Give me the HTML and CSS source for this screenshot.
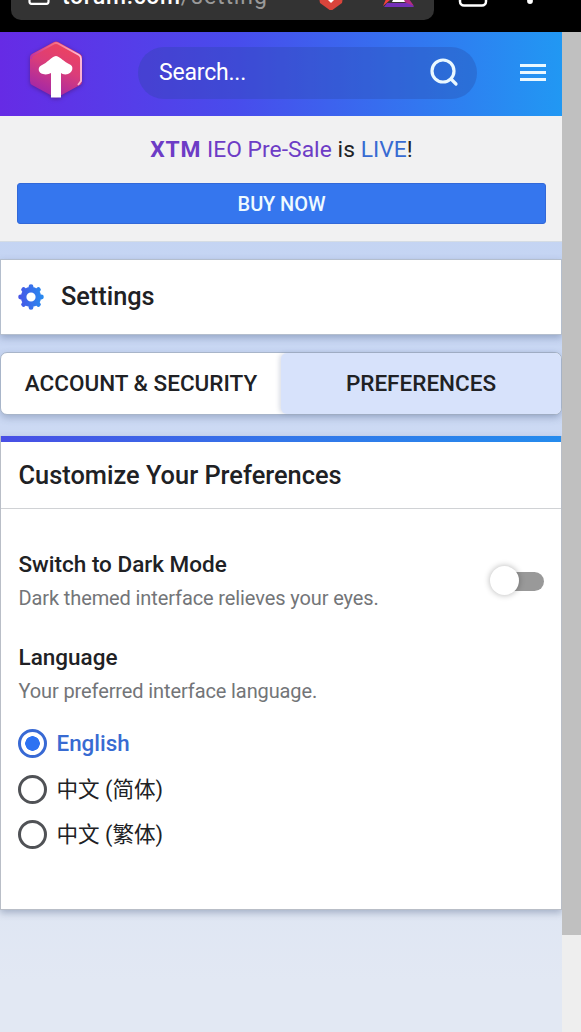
FILE: index.html
```html
<!DOCTYPE html>
<html lang="en">
<head>
<meta charset="utf-8">
<title>Settings</title>
<link rel="stylesheet" href="styles.css">
</head>
<body>
<div class="browser-bar">
  <div class="address">
    <svg class="lock" width="24" height="20" viewBox="0 0 24 20"><rect x="2.500" y="3" width="19" height="14.800" rx="2" fill="none" stroke="#fff" stroke-width="2.200"/></svg>
    <span class="url">torum.com<span class="path">/setting</span></span>
    <svg class="shield" width="28" height="24" viewBox="0 0 28 24"><path d="M0 0H28L25 17L14 25L3 17Z" fill="#d9443b"/><path d="M10 8H18L17 14L14 17L11 14Z" fill="#fff"/></svg>
    <svg class="reward" width="34" height="24" viewBox="0 0 34 24"><path d="M8 4H17V14H8L1 20Z" fill="#f5413c"/><path d="M5 17H29L32 21H2Z" fill="#7430b8"/><path d="M17 4L27 13L32 20L20 15Z" fill="#b52c83"/><path d="M12 12H21L23 16H10Z" fill="#fff"/></svg>
  </div>
  <svg class="browser-actions" width="120" height="32" viewBox="0 0 120 32"><rect x="14" y="-20" width="26" height="25.500" rx="4" fill="none" stroke="#fff" stroke-width="2.500"/><circle cx="84" cy="1" r="2.900" fill="#fff"/></svg>
</div>
<div class="viewport">
  <div class="page">
    <header class="header">
      <svg class="logo" width="66" height="68" viewBox="0 0 66 68">
        <defs>
          <linearGradient id="hex" x1="0.700" y1="0" x2="0.300" y2="1"><stop offset="0" stop-color="#f0435b"/><stop offset="0.450" stop-color="#db3d79"/><stop offset="1" stop-color="#9d25ac"/></linearGradient>
          <linearGradient id="rim" x1="0" y1="0.500" x2="1" y2="0.400"><stop offset="0" stop-color="#bd2fa8"/><stop offset="0.500" stop-color="#f36b81"/><stop offset="1" stop-color="#ffc2df"/></linearGradient>
        </defs>
        <path d="M32 5Q34 4 36 5L58 17Q60 18 60 21V44Q60 47 58 48L36 60Q34 61 32 60L10 48Q8 47 8 44V21Q8 18 10 17Z" fill="url(#hex)"/>
        <path d="M9 22Q9 19 11 18L32 6.500Q34 5.500 36 6.500L57 18Q59 19 59 22V44L56 48" fill="none" stroke="url(#rim)" stroke-width="1.800"/>
        <path d="M34 19C39 20 42 25 47 27C53 29 50 36 46 37C43 38 40 37 39 36V60.500H29V36C27 37 24 38 21 37C16 36 15 30 20 28C25 26 29 20 34 19Z" fill="#fff"/>
      </svg>
      <div class="search"><span class="search-text">Search...</span>
        <svg width="30" height="30" viewBox="0 0 30 30" fill="none" stroke="#eaf8ff" stroke-width="3.200" stroke-linecap="round"><circle cx="13" cy="13" r="11"/><path d="M21 21L26 26"/></svg>
      </div>
      <svg class="menu" width="26" height="18" viewBox="0 0 26 18" fill="#eaf8ff"><path d="M0 0H26V3H0ZM0 7H26V10H0ZM0 14H26V17H0Z"/></svg>
    </header>
    <section class="banner">
      <div class="sale"><span class="token"><b>XTM</b> IEO Pre-Sale</span> is <span class="live">LIVE</span>!</div>
      <div class="buy">BUY NOW</div>
    </section>
    <div class="card title">
      <svg class="gear" width="26" height="26" viewBox="-13 -13 26 26">
        <defs><linearGradient id="blue" gradientUnits="userSpaceOnUse" x1="-12" y1="0" x2="12" y2="0"><stop offset="0" stop-color="#4755e6"/><stop offset="1" stop-color="#298bef"/></linearGradient></defs>
        <circle r="7.400" fill="none" stroke="url(#blue)" stroke-width="5.600"/>
        <path d="M0-10V-10.400M0 10V10.400M-10 0H-10.400M10 0H10.400M-7-7L-7.400-7.400M7 7L7.400 7.400M-7 7L-7.400 7.400M7-7L7.400-7.400" fill="none" stroke="url(#blue)" stroke-width="4.800" stroke-linecap="round"/>
      </svg>
      <span class="title-text">Settings</span>
    </div>
    <nav class="tabs"><div class="tab"><span class="account">ACCOUNT &amp; SECURITY</span></div><div class="tab active"><span class="prefs">PREFERENCES</span></div></nav>
    <main class="panel">
      <h2 class="panel-title"><span>Customize Your Preferences</span></h2>
      <div class="dark-row">
        <div><h3 class="dark-title">Switch to Dark Mode</h3><p class="dark-note">Dark themed interface relieves your eyes.</p></div>
        <div class="switch"><div class="knob"></div></div>
      </div>
      <h3 class="lang-title">Language</h3>
      <p class="lang-note">Your preferred interface language.</p>
      <div class="options">
        <div class="option selected"><i class="radio"></i><span>English</span></div>
        <div class="option" lang="zh-Hans"><i class="radio"></i><span>中文 (简体)</span></div>
        <div class="option" lang="zh-Hant"><i class="radio"></i><span>中文 (繁体)</span></div>
      </div>
    </main>
  </div>
  <div class="scroll"><div class="thumb"></div></div>
</div>
</body>
</html>
```
FILE: styles.css
```css
* { box-sizing: border-box; }
body { margin: 0; height: 1032px; overflow: hidden; font-family: Roboto, "Noto Sans CJK SC", sans-serif; color: #202124; }
h2, h3, p { margin: 0; font-weight: 500; }
svg { display: block; flex: none; }
.browser-bar { display: flex; height: 32px; background: #000; overflow: hidden; }
.address { display: flex; width: 423px; height: 34px; margin: -14px 0 0 11px; border-radius: 10px; background: #333; flex: none; }
.lock { margin-left: 16px; }
.url { margin-left: 11px; width: 206px; font-size: 23px; font-weight: 500; line-height: 28px; margin-top: -3px; color: #fff; letter-spacing: .65px; white-space: nowrap; }
.path { color: #999; font-weight: 400; letter-spacing: .9px; }
.shield { margin-left: 49px; }
.reward { margin-left: 37px; }
.browser-actions { margin-left: 12px; }
.viewport { display: flex; height: 1000px; }
.page { width: 562px; height: 1000px; background: linear-gradient(#c4d4f3 0 20%, #e2e8f3 95%); }
.scroll { width: 19px; background: #eee; }
.thumb { height: 903px; background: #c0c0c0; }
.header { display: flex; height: 84px; background: linear-gradient(90deg, #662be5, #484cec 42%, #2198f3); }
.logo { margin: 5px 0 0 22px; filter: drop-shadow(0 1px 2px #50209c); }
.search { display: flex; width: 339px; height: 52px; margin: 15px 0 0 50px; padding: 11px 17px 0 21px; justify-content: space-between; background: rgba(40,70,160,.3); border-radius: 26px; }
.search-text { color: #fff; font-size: 23px; line-height: 30px; letter-spacing: -.2px; }
.menu { margin: 32px 0 0 43px; }
.banner { height: 126px; padding: 20px 16px 0 17px; background: #f1f1f2; border-bottom: 1px solid #d5dce4; }
.sale { height: 28px; text-align: center; font-size: 22.800px; line-height: 27px; letter-spacing: .05px; white-space: nowrap; }
.token { color: #6d3cc6; }
.token b { font-weight: 700; letter-spacing: .8px; }
.live { color: #386bd2; }
.buy { height: 41px; margin-top: 19px; background: #3576ee; border: 1px solid #3268d8; border-radius: 3px; color: #eefaff; text-align: center; font-size: 20px; font-weight: 500; line-height: 40px; letter-spacing: -.1px; }
.card { border: 1px solid #b4becd; background: #fff; box-shadow: 0 3px 7px rgba(60,80,120,.35); }
.title { display: flex; align-items: center; height: 76px; margin-top: 17px; padding: 0 0 1px 17px; }
.title-text { margin-left: 17px; font-size: 25.300px; font-weight: 500; }
.tabs { display: grid; grid-template-columns: 1fr 1fr; height: 63px; margin-top: 17px; border: 1px solid #a8b5c9; border-radius: 7px; background: #fff; box-shadow: 0 3px 7px rgba(60,80,120,.3); }
.tab { text-align: center; font-size: 22.500px; font-weight: 500; line-height: 60px; border-radius: 6px; }
.active { background: #d7e2fb; box-shadow: -2px 0 4px rgba(60,80,120,.18); }
.panel { height: 474px; margin-top: 21px; border: 1px solid #b9bec7; border-top: 0; background: linear-gradient(90deg, #484fe5, #3376e9 50%, #258bed) top / 100% 6px no-repeat, #fff; box-shadow: 0 3px 7px rgba(60,80,120,.35); }
.panel-title { height: 73px; padding: 6px 0 0 17.500px; border-bottom: 1px solid #d0d2d5; font-size: 25.400px; line-height: 67px; }
.dark-row { display: flex; justify-content: space-between; padding: 41px 17px 0 17.500px; }
.dark-title, .lang-title { font-size: 22.500px; line-height: 28px; }
.dark-note, .lang-note { font-size: 20px; font-weight: 400; line-height: 26px; color: #737578; letter-spacing: -.11px; }
.dark-note { margin-top: 7px; }
.switch { width: 52px; height: 19px; margin-top: 22px; border-radius: 10px; background: #999; }
.knob { width: 29px; height: 29px; margin: -6px 0 0 -2px; border-radius: 50%; background: #fff; box-shadow: 0 0 6px rgba(0,0,0,.3); }
.lang-title { margin: 32px 0 0 17.500px; }
.lang-note { margin: 7px 0 0 17.500px; }
.options { display: grid; gap: 16.500px; margin: 25px 0 0 17px; }
.option { display: flex; align-items: center; height: 29px; font-size: 21.600px; line-height: 29px; }
.option span { margin-left: 9.500px; }
.radio { width: 29px; height: 29px; border: 3px solid #505256; border-radius: 50%; }
.selected { color: #386bd2; font-size: 22.400px; font-weight: 500; }
.selected .radio { border-color: #3869d4; background: radial-gradient(circle, #2d72f2 0 7px, transparent 7.500px); }
```
